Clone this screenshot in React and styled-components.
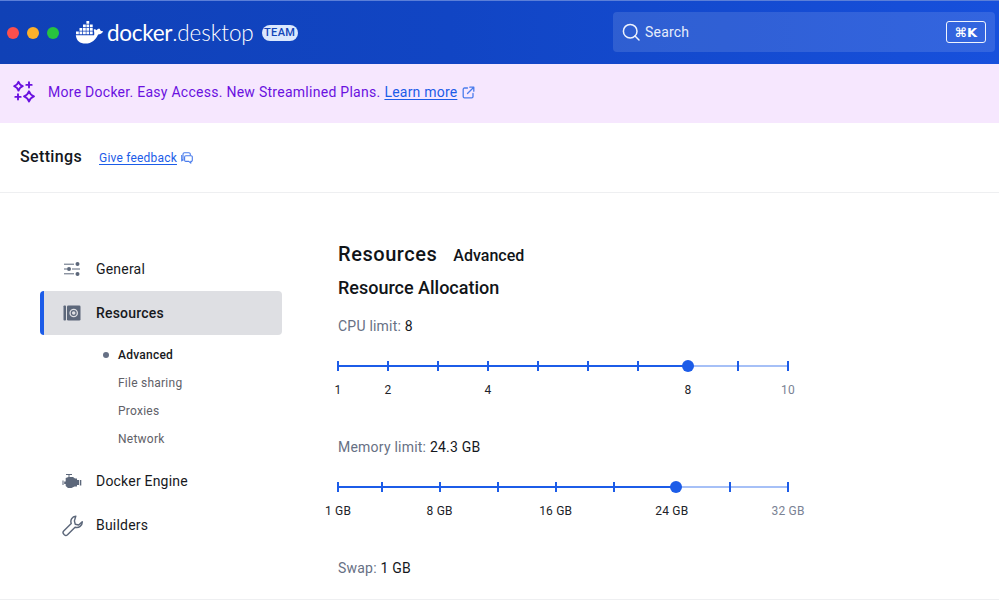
import React from "react";
import styled, { createGlobalStyle } from "styled-components";

const Global = createGlobalStyle`
  html, body { margin: 0; padding: 0; background: #fff; }
  body { font-family: Roboto, "Liberation Sans", sans-serif; overflow: hidden; }
`;

const Page = styled.div`
  width: 999px;
  height: 616px;
  display: flex;
  flex-direction: column;
  overflow: hidden;
  background: #fff;
`;

const TopBar = styled.header`
  height: 64px;
  box-sizing: border-box;
  flex: none;
  display: flex;
  align-items: center;
  border-top: 1px solid #5b7fd8;
  background: linear-gradient(90deg, #1041b6 0%, #1145c4 45%, #1750dc 100%);
  padding: 0 4px 0 7px;
`;

const Lights = styled.div`
  display: flex;
  gap: 8px;
  margin-right: 16px;
`;

const Light = styled.span`
  width: 12px;
  height: 12px;
  border-radius: 50%;
  background: ${(p) => p.$color};
`;

const Brand = styled.div`
  display: flex;
  align-items: center;
  color: #fff;
`;

const Wordmark = styled.div`
  margin-left: 2px;
  font-family: Lato, Roboto, sans-serif;
  font-size: 22.5px;
  line-height: 28px;
  white-space: nowrap;
  letter-spacing: -0.3px;
  b { font-weight: 400; }
  span { font-weight: 300; letter-spacing: -0.1px; }
`;

const Badge = styled.span`
  margin-left: 8px;
  height: 16px;
  width: 36px;
  border-radius: 8px;
  background: #dbe8fd;
  color: #1145b8;
  font-size: 11px;
  font-weight: 500;
  letter-spacing: 0.4px;
  display: flex;
  align-items: center;
  justify-content: center;
`;

const SearchBox = styled.div`
  margin-left: auto;
  width: 382px;
  height: 40px;
  margin-top: -1px;
  border-radius: 4px;
  background: rgba(255, 255, 255, 0.12);
  display: flex;
  align-items: center;
  padding: 0 9px 0 8px;
  box-sizing: border-box;
  color: #e6edfb;
  font-size: 14px;
  letter-spacing: 0.2px;
`;

const SearchLabel = styled.span`
  margin-left: 4px;
`;

const Kbd = styled.span`
  margin-left: auto;
  width: 40px;
  height: 22px;
  box-sizing: border-box;
  border: 1px solid #f0f4fd;
  border-radius: 3px;
  display: flex;
  align-items: center;
  justify-content: center;
  color: #fff;
  font-size: 13px;
  font-weight: 700;
  font-family: "DejaVu Sans", Roboto, sans-serif;
  letter-spacing: 0.3px;
`;

const Banner = styled.div`
  height: 59px;
  flex: none;
  background: #f6e7fe;
  display: flex;
  align-items: center;
  padding: 0 0 4px 12px;
  box-sizing: border-box;
  color: #6a11e0;
  font-size: 14px;
  letter-spacing: 0.27px;
`;

const BannerText = styled.span`
  margin-left: 12px;
`;

const TextLink = styled.a`
  color: ${(p) => p.$color || "#1c5ce8"};
  text-decoration: underline;
  text-underline-offset: 2px;
  font-size: ${(p) => p.$size || 14}px;
  letter-spacing: ${(p) => p.$spacing ?? 0.21}px;
  margin-left: ${(p) => p.$gap || 0}px;
`;

const LinkIcon = styled.span`
  display: inline-flex;
  margin-left: ${(p) => p.$gap || 5}px;
  color: #4a7cec;
  vertical-align: ${(p) => p.$align || -2}px;
`;

const SettingsBar = styled.div`
  height: 70px;
  flex: none;
  box-sizing: border-box;
  border-bottom: 1px solid #eeeff1;
  display: flex;
  align-items: center;
  padding: 0 0 2px 20px;
`;

const SettingsTitle = styled.h1`
  margin: 0 17px 0 0;
  font-size: 16px;
  line-height: 20px;
  font-weight: 500;
  letter-spacing: 0.35px;
  color: #14171c;
`;

const Main = styled.div`
  height: 407px;
  flex: none;
  box-sizing: border-box;
  border-bottom: 1px solid #eeeff1;
  display: flex;
  overflow: hidden;
`;

const Sidebar = styled.nav`
  width: 242px;
  flex: none;
  margin: 54px 0 0 40px;
`;

const NavRow = styled.div`
  height: 44px;
  box-sizing: border-box;
  display: flex;
  align-items: center;
  padding-left: ${(p) => (p.$active ? 17 : 21)}px;
  border-radius: 4px;
  font-size: 14px;
  letter-spacing: 0.2px;
  color: #17191d;
  font-weight: ${(p) => (p.$active ? 500 : 400)};
  background: ${(p) => (p.$active ? "#dedfe3" : "transparent")};
  border-left: ${(p) => (p.$active ? "4px solid #1c5ce8" : "0")};
`;

const NavIcon = styled.span`
  width: 22px;
  height: 22px;
  color: #5c677a;
  display: flex;
  align-items: center;
  justify-content: center;
  margin-right: 13px;
`;

const SubList = styled.div`
  padding: 6px 0;
`;

const SubItem = styled.div`
  height: 28px;
  display: flex;
  align-items: center;
  padding-left: 78px;
  position: relative;
  font-size: 12px;
  letter-spacing: 0.24px;
  font-weight: ${(p) => (p.$active ? 500 : 400)};
  color: ${(p) => (p.$active ? "#17191d" : "#5f6168")};
`;

const Bullet = styled.span`
  position: absolute;
  left: 63px;
  top: 11px;
  width: 6px;
  height: 6px;
  border-radius: 50%;
  background: #667085;
`;

const Content = styled.section`
  margin: 49px 0 0 56px;
  width: 450px;
`;

const TitleRow = styled.div`
  display: flex;
  align-items: baseline;
  height: 24px;
`;

const Title = styled.h2`
  margin: 0 16px 0 0;
  font-size: 20px;
  line-height: 24px;
  font-weight: 500;
  letter-spacing: 0.55px;
  color: #111418;
`;

const Tab = styled.span`
  font-size: 16px;
  font-weight: 500;
  letter-spacing: 0;
  color: #111418;
`;

const Subtitle = styled.h3`
  margin: 10px 0 0;
  font-size: 18px;
  line-height: 24px;
  font-weight: 500;
  letter-spacing: -0.01px;
  color: #111418;
`;

const Limit = styled.div`
  margin-top: ${(p) => p.$top}px;
  font-size: 14px;
  line-height: 20px;
  letter-spacing: 0.22px;
  color: #677084;
  b { font-weight: 400; color: #15181d; }
`;

const SliderWrap = styled.div`
  margin-top: 20px;
  height: 50px;
  position: relative;
`;

const Track = styled.div`
  position: absolute;
  left: 0;
  right: 0;
  top: 9px;
  height: 2px;
  background: #a6c0f7;
`;

const Fill = styled.div`
  position: absolute;
  left: 0;
  top: 0;
  height: 2px;
  background: #1c5ce8;
  width: ${(p) => p.$pct}%;
`;

const Tick = styled.span`
  position: absolute;
  top: -4px;
  left: ${(p) => p.$pct}%;
  width: 2px;
  height: 10px;
  margin-left: -1px;
  background: #1c5ce8;
`;

const Thumb = styled.span`
  position: absolute;
  top: -5px;
  left: ${(p) => p.$pct}%;
  width: 12px;
  height: 12px;
  margin-left: -6px;
  border-radius: 50%;
  background: #1c5ce8;
`;

const Mark = styled.span`
  position: absolute;
  top: 26px;
  left: ${(p) => p.$pct}%;
  transform: translateX(-50%);
  font-size: 12px;
  line-height: 16px;
  letter-spacing: 0.2px;
  white-space: nowrap;
  color: ${(p) => (p.$muted ? "#7a8294" : "#202329")};
`;

const Whale = () => (
  <svg width="30" height="26" viewBox="0 0 30 26" fill="currentColor">
    <path d="M11.4 1h2.8v2.7h-2.800zM11.4 4.400h2.800v2.800h-2.800zM8 4.400h2.800v2.800H8zM11.400 8h2.800v2.800h-2.800zM8 8h2.800v2.800H8zM4.500 8h2.800v2.800H4.500zM15 8h2.700v2.800H15zM15 4.400h2.700v2.800H15zM1 11.500h2.800v2.700H1zM4.500 11.500h2.800v2.700H4.500zM8 11.500h2.800v2.700H8zM11.400 11.500h2.800v2.700h-2.800zM15 11.500h2.700v2.700H15z" />
    <path d="M0.800 15.200h18.300c.3-1 .2-3.800-.4-5.500 1-.9 1.800-.5 2.800.6.500-1.200 2.300-2 3.300-1.500.3 1.500.8 2.600 3.400 2.400-.9 2.300-3.400 3-5.100 3.200-2 5.100-6.400 9.100-12.700 9.100-5.500 0-8.800-2.600-9.600-8.300z" />
  </svg>
);

const SearchIcon = () => (
  <svg width="20" height="20" viewBox="0 0 20 20" fill="none" stroke="#eef3fd" strokeWidth="1.500">
    <circle cx="9.200" cy="9.200" r="6.800" />
    <path d="M14 14l4 4" strokeLinecap="round" />
  </svg>
);

const Sparkles = () => (
  <svg width="24" height="24" viewBox="0 0 24 24" fill="none" stroke="#6a11e0" strokeWidth="1.900" strokeLinejoin="round" strokeLinecap="round">
    <path d="M6.500 1.800Q7.500 5 10.800 6.200 7.500 7.400 6.500 10.600 5.500 7.400 2.200 6.200 5.500 5 6.500 1.800z" />
    <path d="M17 11.300Q18.200 15 22 16.400 18.200 17.800 17 21.500 15.800 17.800 12 16.400 15.800 15 17 11.300z" />
    <path d="M17 2.200v5.400M14.300 4.900h5.400" />
    <path d="M6 14.200v5.400M3.300 16.900h5.400" />
  </svg>
);

const External = () => (
  <svg width="13" height="13" viewBox="0 0 13 13" fill="none" stroke="currentColor" strokeWidth="1.300" strokeLinecap="round" strokeLinejoin="round">
    <path d="M5.500 2H2.500A1.300 1.300 0 0 0 1.200 3.300v7.200a1.300 1.300 0 0 0 1.300 1.300h7.200a1.300 1.300 0 0 0 1.300-1.300V7.500" />
    <path d="M5.500 7.500L11.800 1.200M7.800 1.200h4v4" />
  </svg>
);

const Feedback = () => (
  <svg width="12" height="12" viewBox="0 0 12 12" fill="none" stroke="currentColor" strokeWidth="1.100" strokeLinejoin="round">
    <path d="M2 8.800V2.300A1.500 1.500 0 0 1 3.500.8h4.300a1.500 1.500 0 0 1 1.500 1.500v1.300" />
    <path d="M2 7.500L.7 8.800V3" />
    <path d="M4.800 3.800h5.300a1.200 1.200 0 0 1 1.200 1.200v3.200a1.200 1.200 0 0 1-1.200 1.200H9.800v1.800L7.800 9.400h-3a1.200 1.200 0 0 1-1.200-1.200V5a1.200 1.200 0 0 1 1.200-1.200z" />
  </svg>
);

const Sliders = () => (
  <svg width="18" height="16" viewBox="0 0 18 16" fill="currentColor" stroke="currentColor">
    <path d="M1 3.200h10M1 8h3M9 8h8M1 12.800h10" strokeWidth="1" fill="none" />
    <circle cx="14.500" cy="3" r="2" stroke="none" />
    <circle cx="6" cy="8" r="2" stroke="none" />
    <circle cx="14.500" cy="13" r="2" stroke="none" />
  </svg>
);

const Disk = () => (
  <svg width="18" height="16" viewBox="0 0 18 16">
    <rect x="0.500" y="0.500" width="2.500" height="15" rx="0.800" fill="currentColor" />
    <rect x="4" y="0.500" width="13.500" height="15" rx="1.300" fill="currentColor" />
    <circle cx="10.700" cy="8" r="4.300" fill="#dedfe3" />
    <circle cx="10.700" cy="8" r="3" fill="currentColor" />
    <circle cx="10.700" cy="8" r="1.800" fill="#dedfe3" />
  </svg>
);

const Engine = () => (
  <svg width="20" height="16" viewBox="0 0 20 16" fill="currentColor">
    <path d="M4 1h6v1H7.500v2H11l2 1.500h2V7h2V12h-2v1.500h-2.500L9.500 15H6L3.700 13V11H2.200V8.500H3.700V5l2.800-1V2H4z" />
    <path d="M0.500 7.500h1v4.500h-1zM17.800 7h1.500v5.500h-1.500z" />
  </svg>
);

const Wrench = () => (
  <svg width="23" height="23" viewBox="0 0 23 23" fill="none" stroke="currentColor" strokeWidth="1.500" strokeLinejoin="round" strokeLinecap="round">
    <path d="M14.500 1.700a5.700 5.700 0 0 0-4.800 7.700L1.800 17.300a2.400 2.400 0 0 0 0 3.200l.7.700a2.400 2.400 0 0 0 3.300 0l7.900-7.900a5.700 5.700 0 0 0 7.500-5.800l-3.700 3.500-3.600-.8-.9-3.500z" transform="translate(1 0)" />
  </svg>
);

const makeSlider = (min, max, ticks, labels, value) => {
  const pct = (v) => ((v - min) / (max - min)) * 100;
  return { pct, ticks, labels, value };
};

const cpu = makeSlider(1, 10, [1, 2, 3, 4, 5, 6, 7, 8, 9, 10],
  [[1, "1"], [2, "2"], [4, "4"], [8, "8"], [10, "10", true]], 8);
const memory = makeSlider(1, 32, [1, 4, 8, 12, 16, 20, 28, 32],
  [[1, "1 GB"], [8, "8 GB"], [16, "16 GB"], [24, "24 GB"], [32, "32 GB", true]], 24.3);

const Slider = ({ data }) => (
  <SliderWrap>
    <Track>
      <Fill $pct={data.pct(data.value)} />
      {data.ticks.map((t) => (
        <Tick key={t} $pct={data.pct(t)} />
      ))}
      <Thumb $pct={data.pct(data.value)} />
    </Track>
    {data.labels.map(([v, text, muted]) => (
      <Mark key={text} $pct={data.pct(v)} $muted={muted}>{text}</Mark>
    ))}
  </SliderWrap>
);

export default function App() {
  return (
    <Page>
      <Global />
      <TopBar>
        <Lights>
          <Light $color="#fc4f4c" />
          <Light $color="#fdb02a" />
          <Light $color="#27c33e" />
        </Lights>
        <Brand>
          <Whale />
          <Wordmark><b>docker</b><span>.desktop</span></Wordmark>
          <Badge>TEAM</Badge>
        </Brand>
        <SearchBox>
          <SearchIcon />
          <SearchLabel>Search</SearchLabel>
          <Kbd>⌘K</Kbd>
        </SearchBox>
      </TopBar>
      <Banner>
        <Sparkles />
        <BannerText>
          More Docker. Easy Access. New Streamlined Plans.
          <TextLink $gap={4}>Learn more</TextLink>
          <LinkIcon><External /></LinkIcon>
        </BannerText>
      </Banner>
      <SettingsBar>
        <SettingsTitle>Settings</SettingsTitle>
        <span>
          <TextLink $size={12} $spacing={0.2}>Give feedback</TextLink>
          <LinkIcon $gap={4}><Feedback /></LinkIcon>
        </span>
      </SettingsBar>
      <Main>
        <Sidebar>
          <NavRow><NavIcon><Sliders /></NavIcon>General</NavRow>
          <NavRow $active><NavIcon><Disk /></NavIcon>Resources</NavRow>
          <SubList>
            <SubItem $active><Bullet />Advanced</SubItem>
            <SubItem>File sharing</SubItem>
            <SubItem>Proxies</SubItem>
            <SubItem>Network</SubItem>
          </SubList>
          <NavRow><NavIcon><Engine /></NavIcon>Docker Engine</NavRow>
          <NavRow><NavIcon><Wrench /></NavIcon>Builders</NavRow>
        </Sidebar>
        <Content>
          <TitleRow>
            <Title>Resources</Title>
            <Tab>Advanced</Tab>
          </TitleRow>
          <Subtitle>Resource Allocation</Subtitle>
          <Limit $top={16}>CPU limit: <b>8</b></Limit>
          <Slider data={cpu} />
          <Limit $top={31}>Memory limit: <b>24.3 GB</b></Limit>
          <Slider data={memory} />
          <Limit $top={31}>Swap: <b>1 GB</b></Limit>
        </Content>
      </Main>
    </Page>
  );
}
